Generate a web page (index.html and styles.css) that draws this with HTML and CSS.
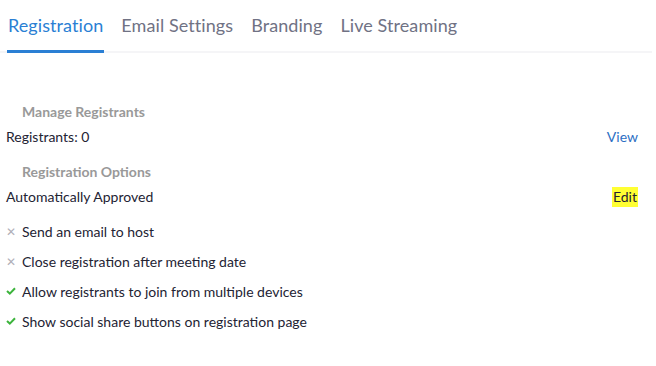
FILE: index.html
```html
<!DOCTYPE html>
<html lang="en">
<head>
<meta charset="UTF-8">
<meta name="viewport" content="width=device-width, initial-scale=1.0">
<title>Registration</title>
<link rel="stylesheet" href="styles.css">
</head>
<body>

    <!-- Pestañas -->
    <div class="tabs">
      <a class="tab active">Registration</a>
      <a class="tab">Email Settings</a>
      <a class="tab">Branding</a>
      <a class="tab">Live Streaming</a>
    </div>

    <div class="panel">
      <div class="section-title">Manage Registrants</div>
      <div class="row">
        <span>Registrants: 0</span>
        <a class="link">View</a>
      </div>

      <div class="section-title">Registration Options</div>
      <div class="row">
        <span>Automatically Approved</span>
        <a class="edit">Edit</a>
      </div>

      <ul class="options">
        <li class="off"><span class="mark">&#10005;</span>Send an email to host</li>
        <li class="off"><span class="mark">&#10005;</span>Close registration after meeting date</li>
        <li class="on">
          <svg class="mark" width="10" height="8" viewBox="0 0 10 8"><path d="M1 4 L3.8 6.6 L9 1.2" fill="none" stroke="#3cb43c" stroke-width="2"/></svg>Allow registrants to join from multiple devices</li>
        <li class="on">
          <svg class="mark" width="10" height="8" viewBox="0 0 10 8"><path d="M1 4 L3.8 6.6 L9 1.2" fill="none" stroke="#3cb43c" stroke-width="2"/></svg>Show social share buttons on registration page</li>
      </ul>
    </div>

</body>
</html>
```

FILE: styles.css
```css
  body {
      margin: 0;
      background-color: #fff;
      font-family: Lato, "Open Sans", sans-serif;
      color: #232333;
  }

  /* Barra de pestañas */
  .tabs {
      display: flex;
      gap: 16px;
      margin-right: 4px;
      padding-left: 7px;
      border-bottom: 2px solid #f5f5f7;
  }

  .tab {
      padding: 14px 1px 14px;
      font-size: 18px;
      line-height: 22px;
      letter-spacing: 0.08px;
      color: #707284;
      cursor: pointer;
      border-bottom: 3px solid transparent;
      margin-bottom: -2px;
  }

  .tab.active {
      color: #2a7fd4;
      border-bottom-color: #2a7fd4;
  }

  /* Contenido */
  .panel {
      padding: 34px 18px 0 6px;
      font-size: 14px;
  }

  .section-title {
      margin-top: 15px;
      padding-left: 16px;
      color: #999;
      font-weight: bold;
      line-height: 20px;
  }

  .row {
      display: flex;
      justify-content: space-between;
      align-items: center;
      line-height: 20px;
      margin-top: 5px;
  }

  .link {
      color: #2d6fc4;
      cursor: pointer;
  }

  .edit {
      background-color: #ffff33;
      color: #232333;
      padding: 0 1px;
      cursor: pointer;
  }

  .options {
      list-style: none;
      margin: 9px 0 0;
      padding: 0;
  }

  .options li {
      display: flex;
      align-items: center;
      height: 30px;
  }

  .mark {
      width: 10px;
      margin-right: 6px;
      flex-shrink: 0;
  }

  .off .mark {
      color: #b0b0b8;
      font-size: 12px;
  }
```
